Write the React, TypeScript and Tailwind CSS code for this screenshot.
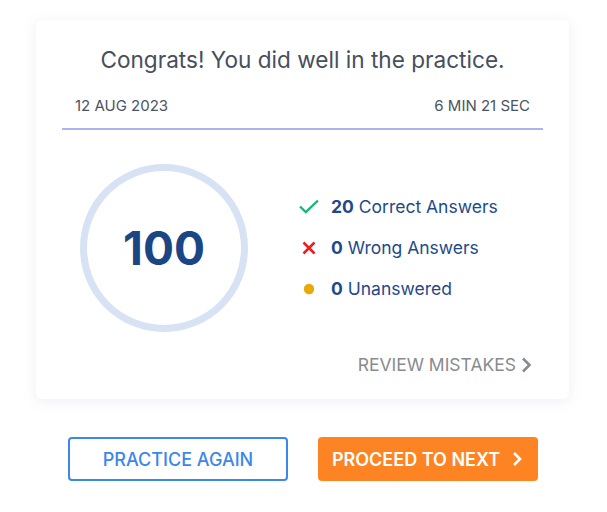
import React from "react";

export default function App() {
  return (
    <div className="w-[607px] h-[512px] bg-white pt-[20px]" style={{ fontFamily: "Inter, 'Liberation Sans', sans-serif" }}>
      <div className="ml-[36px] w-[533px] h-[379px] bg-white rounded-[6px] shadow-[0_2px_14px_rgba(120,130,180,0.13)] px-[26px] pt-[25px]">
        <h1 className="text-center text-[22.6px] leading-[30px] text-[#464f5e]">Congrats! You did well in the practice.</h1>
        <div className="mt-[21px] flex justify-between px-[13px] pb-[12px] border-b-2 border-[#a9b4f3] text-[15px] leading-[20px] text-[#4b5463]">
          <span>12 AUG 2023</span>
          <span>6 MIN 21 SEC</span>
        </div>
        <div className="flex items-center mt-[34px]">
          <div className="ml-[18px] w-[168px] h-[168px] rounded-full border-[7px] border-[#d7e2f4] flex items-center justify-center">
            <span className="text-[46px] font-bold text-[#1b4686] leading-none">100</span>
          </div>
          <div className="ml-[51px] flex flex-col gap-[19px] text-[17.5px] leading-[22px] text-[#1e4a8c]">
            <div className="flex items-center">
              <svg width="20" height="20" viewBox="0 0 20 20" className="mr-[12px]"><path d="M1 9.5 L6.8 15 L19 3.5" fill="none" stroke="#17b67a" strokeWidth="2.4" /></svg>
              <span><b>20</b> Correct Answers</span>
            </div>
            <div className="flex items-center">
              <svg width="20" height="20" viewBox="0 0 20 20" className="mr-[12px]"><path d="M4.5 4.5 L15.5 15.5 M15.5 4.5 L4.5 15.5" fill="none" stroke="#ee1c1c" strokeWidth="2.5" /></svg>
              <span><b>0</b> Wrong Answers</span>
            </div>
            <div className="flex items-center">
              <svg width="20" height="20" viewBox="0 0 20 20" className="mr-[12px]"><circle cx="10" cy="10" r="5.2" fill="#e9aa08" /></svg>
              <span><b>0</b> Unanswered</span>
            </div>
          </div>
        </div>
        <div className="flex justify-end items-center mt-[21px] pr-[11px] text-[17.5px] leading-[24px] text-[#888b90]">
          <span>REVIEW MISTAKES</span>
          <svg width="12" height="16" viewBox="0 0 12 16" className="ml-[4px]"><path d="M3 1.5 L9.5 8 L3 14.5" fill="none" stroke="#888b90" strokeWidth="2.6" /></svg>
        </div>
      </div>
      <div className="flex ml-[68px] mt-[38px] gap-[30px]">
        <button className="w-[220px] h-[44px] rounded-[4px] border-2 border-[#3c87ea] text-[#3c87ea] text-[18px] font-medium flex items-center justify-center">PRACTICE AGAIN</button>
        <button className="w-[220px] h-[44px] rounded-[4px] bg-[#fe8423] text-white text-[18px] font-semibold flex items-center justify-center">
          PROCEED TO NEXT
          <svg width="14" height="16" viewBox="0 0 14 16" className="ml-[10px]"><path d="M4 2 L10 8 L4 14" fill="none" stroke="white" strokeWidth="2.6" /></svg>
        </button>
      </div>
    </div>
  );
}
